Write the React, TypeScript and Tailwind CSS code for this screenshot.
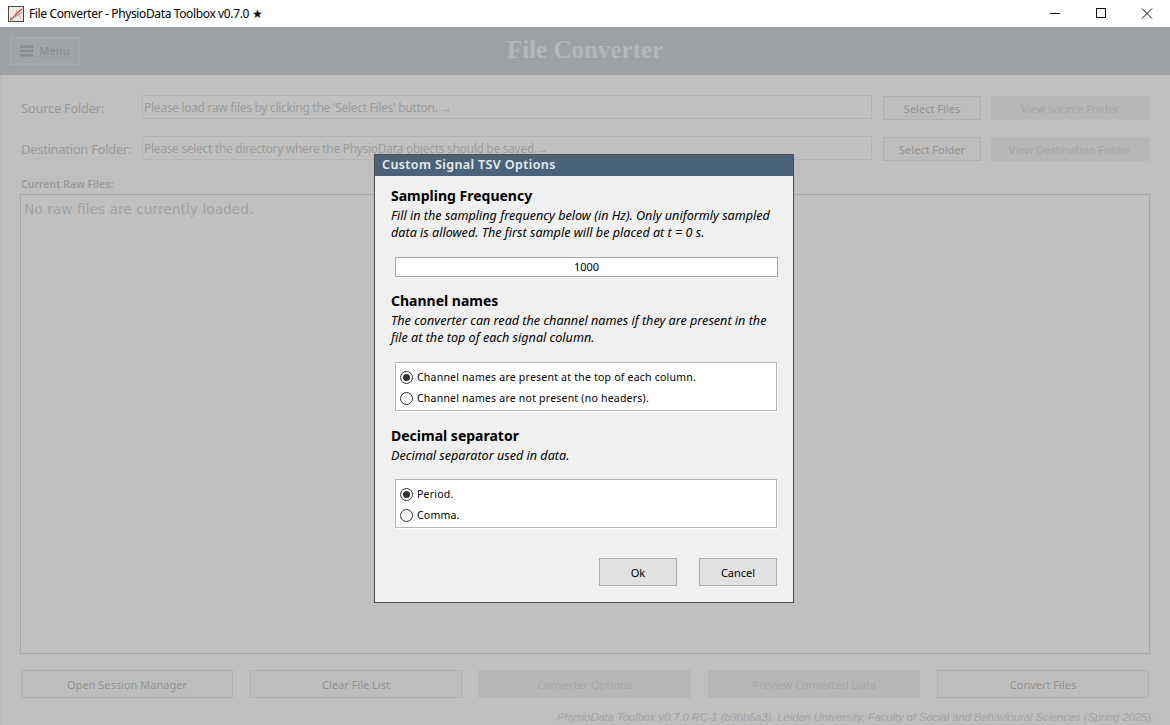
const ui = "font-['Noto_Sans','Open_Sans',sans-serif]";

function Btn({ label, disabled, className }: { label: string; disabled?: boolean; className: string }) {
  return (
    <div
      className={`flex items-center justify-center border pt-[2px] text-[11px] ${
        disabled
          ? "border-[#b8b8b8] bg-[#b6b6b6] text-[#a6a6a6]"
          : "border-[#b0b0b0] bg-[#bdbdbd] text-[#939393]"
      } ${className}`}
    >
      {label}
    </div>
  );
}

function Row({ label, text, b1, b2 }: { label: string; text: string; b1: string; b2: string }) {
  return (
    <div className="flex h-[25px] items-start">
      <div className="w-[142px] whitespace-nowrap pl-[21px] pt-[4px] text-[13px] leading-[18px] tracking-[-0.3px] text-[#9a9a9a]">{label}</div>
      <div className="h-[24px] w-[730px] overflow-hidden whitespace-nowrap border border-[#b4b4b4] bg-[#c0c0c0] pl-[1px] text-[12px] leading-[23px] tracking-[-0.3px] text-[#9c9c9c]">
        {text}
      </div>
      <Btn label={b1} className="ml-[11px] mt-[1px] h-[24px] w-[98px]" />
      <Btn label={b2} disabled className="ml-[10px] mt-[1px] h-[24px] w-[158px]" />
    </div>
  );
}

function Radio({ label, on }: { label: string; on?: boolean }) {
  return (
    <div className="flex h-[21px] items-center pl-[4px]">
      <span className="flex h-[13px] w-[13px] items-center justify-center rounded-full border border-[#333333] bg-white">
        {on && <span className="h-[7px] w-[7px] rounded-full bg-[#333333]" />}
      </span>
      <span className="ml-[4px] text-[10.5px] tracking-[0.22px] text-black">{label}</span>
    </div>
  );
}

function Section({ title, children }: { title: string; children: React.ReactNode }) {
  return (
    <>
      <div className="mb-[1px] text-[14px] font-bold leading-[20px] text-black">{title}</div>
      <div className="whitespace-nowrap text-[12.6px] italic leading-[17px] text-black">{children}</div>
    </>
  );
}

function RadioBox({ children, className }: { children: React.ReactNode; className: string }) {
  return (
    <div className={`ml-[4px] h-[49px] w-[382px] shrink-0 border border-[#b4b4b4] bg-white pt-[4px] shadow-[1px_1px_0_#ffffff] ${className}`}>
      {children}
    </div>
  );
}

export default function App() {
  return (
    <div className={`relative flex h-[725px] w-[1170px] flex-col overflow-hidden bg-[#bfbfbf] ${ui}`}>
      <div className="flex h-[27px] shrink-0 items-center bg-white pl-[8px]">
        <svg width="16" height="16" viewBox="0 0 16 16">
          <rect x="0.5" y="0.5" width="15" height="15" fill="#efe9e4" stroke="#4f4343" />
          <path d="M2 14C5 13 7 8 14 3" stroke="#d9443a" strokeWidth="1.4" fill="none" />
          <path d="M2 12C5 12 9 10 14 6" stroke="#6a90c8" strokeWidth="1" fill="none" />
          <path d="M4 14L9 5L13 13" stroke="#e58a70" strokeWidth="0.8" fill="none" />
        </svg>
        <span className="ml-[5px] text-[12px] tracking-[-0.37px] text-black">File Converter - PhysioData Toolbox v0.7.0 ★</span>
        <div className="ml-auto flex items-center">
          <svg width="12" height="12" viewBox="0 0 12 12" className="mr-[34px]">
            <path d="M1 5.5H11" stroke="#111" />
          </svg>
          <svg width="12" height="12" viewBox="0 0 12 12" className="mr-[34px]">
            <rect x="1.5" y="0.5" width="9" height="9" fill="none" stroke="#111" />
          </svg>
          <svg width="12" height="12" viewBox="0 0 12 12" className="mr-[17px]">
            <path d="M1 0.5L11 10.5M11 0.5L1 10.5" stroke="#111" />
          </svg>
        </div>
      </div>

      <div className="relative flex h-[48px] shrink-0 items-center justify-center bg-[#9da1a4] pb-[2px]">
        <div className="absolute left-[10px] top-[10px] flex h-[28px] w-[70px] items-center justify-center border-2 border-[#a6a9ab] bg-[#a1a4a7] text-[11px] tracking-[0.1px] text-[#888c8f]">
          <svg width="13" height="12" viewBox="0 0 13 12" className="mr-[6px]">
            <path d="M0 0.5H13V3H0ZM0 4.8H13V7.2H0ZM0 9H13V11.5H0Z" fill="#888c8f" />
          </svg>
          Menu
        </div>
        <span className="font-['Liberation_Serif',serif] text-[25px] font-bold text-[#b4b7b9]">File Converter</span>
      </div>

      <div className="flex flex-1 flex-col border-l-2 border-[#bababa]">
        <div className="-ml-[2px] flex flex-col gap-[16px] pt-[20px]">
          <Row label="Source Folder:" text="Please load raw files by clicking the 'Select Files' button. →" b1="Select Files" b2="View Source Folder" />
          <Row label="Destination Folder:" text="Please select the directory where the PhysioData objects should be saved.→" b1="Select Folder" b2="View Destination Folder" />
        </div>
        <div className="-ml-[2px] mt-[15px] pl-[21px] text-[10.5px] font-semibold leading-[16px] text-[#9a9a9a]">Current Raw Files:</div>
        <div className="ml-[18px] mt-[2px] h-[460px] w-[1130px] border border-[#a8a8a8] bg-[#c0c0c0] px-[3px] pb-[3px] pt-[4px] font-['DejaVu_Sans',sans-serif] text-[13.8px] leading-[20px] text-[#a3a3a3]">
          No raw files are currently loaded.
        </div>
        <div className="-ml-[2px] mt-[16px] flex gap-[17px] pl-[21px]">
          <Btn label="Open Session Manager" className="h-[28px] w-[212px]" />
          <Btn label="Clear File List" className="h-[28px] w-[212px]" />
          <Btn label="Converter Options" disabled className="-ml-[1px] h-[28px] w-[213px]" />
          <Btn label="Preview Converted Data" disabled className="h-[28px] w-[212px]" />
          <Btn label="Convert Files" className="h-[28px] w-[212px]" />
        </div>
        <div className="-ml-[2px] mt-[11px] whitespace-nowrap pr-[16px] text-right font-['Liberation_Sans',sans-serif] text-[11.1px] italic leading-[16px] text-[#a4a4a4]">
          PhysioData Toolbox v0.7.0 RC-1 (b9bb6a3). Leiden University, Faculty of Social and Behavioural Sciences (Spring 2025).
        </div>
      </div>

      <div className="absolute left-[374px] top-[154px] flex h-[449px] w-[420px] flex-col border border-[#4f4f4f] bg-[#f0f0f0]">
        <div className="flex h-[21px] shrink-0 items-center bg-[#4a6378] pl-[7px] text-[12.5px] font-semibold tracking-[0.4px] text-[#e8edf1]">
          Custom Signal TSV Options
        </div>
        <div className="flex flex-1 flex-col px-[16px] pt-[10px]">
          <Section title="Sampling Frequency">
            Fill in the sampling frequency below (in Hz). Only uniformly sampled
            <br />
            data is allowed. The first sample will be placed at t = 0 s.
          </Section>
          <div className="ml-[4px] mt-[16px] flex h-[20px] w-[383px] shrink-0 items-center justify-center border border-[#a9a9a9] bg-white text-[11px] text-black">
            1000
          </div>
          <div className="mt-[14px]">
            <Section title="Channel names">
              The converter can read the channel names if they are present in the
              <br />
              file at the top of each signal column.
            </Section>
          </div>
          <RadioBox className="mt-[16px]">
            <Radio label="Channel names are present at the top of each column." on />
            <Radio label="Channel names are not present (no headers)." />
          </RadioBox>
          <div className="mt-[15px]">
            <Section title="Decimal separator">Decimal separator used in data.</Section>
          </div>
          <RadioBox className="mt-[15px]">
            <Radio label="Period." on />
            <Radio label="Comma." />
          </RadioBox>
          <div className="mt-[30px] flex justify-end gap-[22px]">
            <div className="flex h-[28px] w-[78px] items-center justify-center border border-[#adadad] bg-[#e1e1e1] pt-[2px] text-[11px] text-black">Ok</div>
            <div className="flex h-[28px] w-[78px] items-center justify-center border border-[#adadad] bg-[#e1e1e1] pt-[2px] text-[11px] text-black">Cancel</div>
          </div>
        </div>
      </div>
    </div>
  );
}
